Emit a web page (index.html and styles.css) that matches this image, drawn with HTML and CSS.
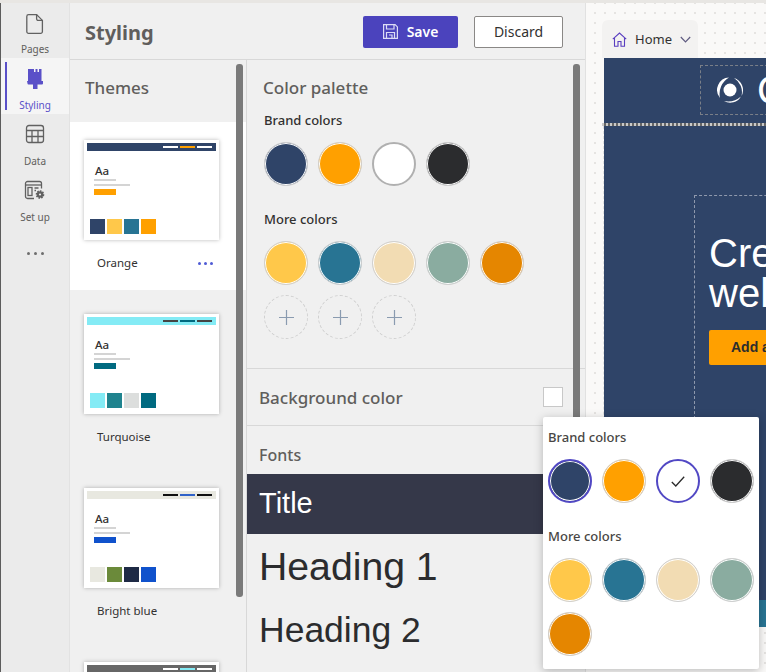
FILE: index.html
```html
<!DOCTYPE html>
<html>
<head>
  <title>Styling</title>
  <meta name="viewport" content="width=device-width, initial-scale=1.0">
  <link rel="stylesheet" href="styles.css">
</head>
<body>
  <div class="topstrip"></div>
  <div class="app">
    <nav class="rail">
      <div class="rail-item">
        <svg width="22" height="22" viewBox="0 0 22 22" fill="none" stroke="#616161" stroke-width="1.300"><path d="M4.600 1.600h8l5.800 5.800v11.200a1.800 1.800 0 0 1-1.800 1.800h-12a1.800 1.800 0 0 1-1.800-1.800v-15.200a1.800 1.800 0 0 1 1.800-1.800z"/><path d="M12.600 1.600v4.200a1.600 1.600 0 0 0 1.600 1.600h4.200"/></svg>
        <span>Pages</span>
      </div>
      <div class="rail-item active">
        <svg width="16" height="22" viewBox="0 0 16 22" fill="#5a50c8"><path d="M1 1h6v3h1.500v-3h2v3h1.500v-3h2.500v12h-13.500z"/><path d="M0 13h16v2.500a1 1 0 0 1-1 1h-4.500v4.500h-4.500v-4.500h-4.500a1 1 0 0 1-1-1z"/></svg>
        <span>Styling</span>
      </div>
      <div class="rail-item">
        <svg width="20" height="20" viewBox="0 0 20 20" fill="none" stroke="#616161" stroke-width="1.300"><rect x="1.500" y="1.500" width="17" height="17" rx="2.500"/><path d="M1.500 6.500h17M1.500 12.500h17M7 6.500v12M13 6.500v12"/></svg>
        <span>Data</span>
      </div>
      <div class="rail-item">
        <svg width="22" height="20" viewBox="0 0 22 20" fill="none" stroke="#616161" stroke-width="1.300"><path d="M10 18.500h-6.500a2 2 0 0 1-2-2v-13a2 2 0 0 1 2-2h12a2 2 0 0 1 2 2v5"/><path d="M1.500 5h16"/><rect x="4" y="7.500" width="4" height="8"/><path d="M10.500 8h4M10.500 10.500h1.500"/><circle cx="16" cy="14.500" r="3.300" fill="#616161" stroke-width="2" stroke-dasharray="1.500 1"/><circle cx="16" cy="14.500" r="1.100" fill="#ebebeb" stroke="none"/></svg>
        <span>Set up</span>
      </div>
      <div class="rail-more"><i></i><i></i><i></i></div>
    </nav>

    <main class="panel">
      <header class="panel-head">
        <h1>Styling</h1>
        <button class="btn btn-save">
          <svg width="15" height="15" viewBox="0 0 15 15" fill="none" stroke="#dcdcf5" stroke-width="1.200"><path d="M.6.600h11.500l2.300 2.300v11.500h-13.800z"/><path d="M3.500.600v4.400h7.500v-4.400M3.500 14.400v-5.900h8v5.900M6 11h3v3.400"/></svg>
          Save
        </button>
        <button class="btn btn-discard">Discard</button>
      </header>

      <div class="columns">
        <section class="themes">
          <div class="scrollbar"></div>
          <h2>Themes</h2>

          <div class="theme selected">
            <div class="thumb">
              <div class="thumb-bar bar-navy"><i class="mark-white"></i><i class="mark-orange"></i><i class="mark-white"></i></div>
              <div class="thumb-aa">Aa</div>
              <div class="thumb-line short"></div>
              <div class="thumb-line"></div>
              <div class="thumb-btn c-orange"></div>
              <div class="thumb-swatches"><i class="c-navy"></i><i class="c-yellow"></i><i class="c-teal"></i><i class="c-orange"></i></div>
            </div>
            <div class="theme-label">Orange<span class="theme-more"><i></i><i></i><i></i></span></div>
          </div>

          <div class="theme">
            <div class="thumb">
              <div class="thumb-bar bar-cyan"><i class="mark-dark"></i><i class="mark-deep"></i><i class="mark-dark"></i></div>
              <div class="thumb-aa">Aa</div>
              <div class="thumb-line short"></div>
              <div class="thumb-line"></div>
              <div class="thumb-btn c-deep"></div>
              <div class="thumb-swatches"><i class="c-cyan"></i><i class="c-sea"></i><i class="c-grey"></i><i class="c-deep"></i></div>
            </div>
            <div class="theme-label">Turquoise</div>
          </div>

          <div class="theme">
            <div class="thumb">
              <div class="thumb-bar bar-sand"><i class="mark-black"></i><i class="mark-blue"></i><i class="mark-black"></i></div>
              <div class="thumb-aa">Aa</div>
              <div class="thumb-line short"></div>
              <div class="thumb-line"></div>
              <div class="thumb-btn c-blue"></div>
              <div class="thumb-swatches"><i class="c-sand"></i><i class="c-olive"></i><i class="c-ink"></i><i class="c-blue"></i></div>
            </div>
            <div class="theme-label">Bright blue</div>
          </div>

          <div class="theme">
            <div class="thumb">
              <div class="thumb-bar bar-grey"><i class="mark-white"></i><i class="mark-cyan"></i><i class="mark-white"></i></div>
            </div>
          </div>
        </section>

        <section class="settings">
          <div class="scrollbar"></div>
          <div class="palette">
            <h2>Color palette</h2>
            <h3>Brand colors</h3>
            <div class="swatch-row">
              <div class="swatch c-navy"></div>
              <div class="swatch c-orange"></div>
              <div class="swatch c-white"></div>
              <div class="swatch c-black"></div>
            </div>
            <h3 class="more">More colors</h3>
            <div class="swatch-row">
              <div class="swatch c-yellow"></div>
              <div class="swatch c-teal"></div>
              <div class="swatch c-cream"></div>
              <div class="swatch c-sage"></div>
              <div class="swatch c-amber"></div>
              <div class="swatch add"><svg width="15" height="15" viewBox="0 0 15 15" stroke="#8a9bb0" stroke-width="1.200"><path d="M7.500 0v15M0 7.500h15"/></svg></div>
              <div class="swatch add"><svg width="15" height="15" viewBox="0 0 15 15" stroke="#8a9bb0" stroke-width="1.200"><path d="M7.500 0v15M0 7.500h15"/></svg></div>
              <div class="swatch add"><svg width="15" height="15" viewBox="0 0 15 15" stroke="#8a9bb0" stroke-width="1.200"><path d="M7.500 0v15M0 7.500h15"/></svg></div>
            </div>
          </div>
          <div class="bg-row">
            <h2>Background color</h2>
            <div class="bg-box"></div>
          </div>
          <div class="fonts">
            <h2>Fonts</h2>
            <div class="font-title">Title</div>
            <div class="font-h1">Heading 1</div>
            <div class="font-h2">Heading 2</div>
          </div>
        </section>
      </div>
    </main>

    <div class="canvas">
      <div class="tab">
        <svg width="15" height="15" viewBox="0 0 15 15" fill="none" stroke="#5a3fc0" stroke-width="1.100"><path d="M.8 7.200l6.700-6.200 6.700 6.200M2.500 5.800v8.500h3.500v-4.800h3v4.800h3.500v-8.500"/></svg>
        <span>Home</span>
        <svg width="11" height="7" viewBox="0 0 11 7" fill="none" stroke="#5f5b80" stroke-width="1.200"><path d="M.8 1l4.700 4.800 4.700-4.800"/></svg>
      </div>
      <div class="site">
        <div class="site-head">
          <div class="logo-box">
            <svg width="28" height="28" viewBox="0 0 28 28" fill="#fff"><circle cx="14" cy="14" r="6.500"/><path d="M4 22A12.500 12.500 0 0 1 13 1.500A19 19 0 0 0 4 22z"/><path d="M18 2A12.500 12.500 0 0 1 25.500 20A16.500 16.500 0 0 0 18 2z"/><path d="M25 20.500A12.500 12.500 0 0 1 8 25A20 20 0 0 0 25 20.500z"/></svg>
            <span class="logo-text">Company</span>
          </div>
        </div>
        <div class="site-sep"></div>
        <div class="site-hero">
          <div class="hero-box">
            <div class="hero-title">Create a<br>welcome</div>
            <div class="hero-btn">Add a button</div>
          </div>
        </div>
        <div class="site-band"></div>
      </div>
    </div>

    <div class="picker">
      <h3>Brand colors</h3>
      <div class="picker-row">
        <div class="swatch c-navy picked"></div>
        <div class="swatch c-orange"></div>
        <div class="swatch c-white picked">
          <svg width="14" height="11" viewBox="0 0 14 11" fill="none" stroke="#2b2b2b" stroke-width="1.300"><path d="M.8 6l4 4 8.400-9.200"/></svg>
        </div>
        <div class="swatch c-black"></div>
      </div>
      <h3 class="more">More colors</h3>
      <div class="picker-row">
        <div class="swatch c-yellow"></div>
        <div class="swatch c-teal"></div>
        <div class="swatch c-cream"></div>
        <div class="swatch c-sage"></div>
        <div class="swatch c-amber"></div>
      </div>
    </div>
  </div>
</body>
</html>
```

FILE: styles.css
```css
* {
  box-sizing: border-box;
}
body {
  margin: 0;
  width: 766px;
  height: 672px;
  overflow: hidden;
  background: #f0f0f0;
  font-family: "Noto Sans", "Open Sans", sans-serif;
  color: #323130;
}
h1, h2, h3 {
  margin: 0;
}
i {
  display: block;
}
.topstrip {
  height: 3px;
  background: #e8e6e3;
}
.app {
  position: relative;
  display: flex;
  height: 669px;
}

/* left rail */
.rail {
  width: 70px;
  flex: none;
  background: #ebebeb;
  border-left: 1px solid #5c5c5c;
  border-right: 1px solid #e2e2e2;
}
.rail-item {
  height: 56px;
  padding: 10px 0 2px;
  display: flex;
  flex-direction: column;
  align-items: center;
  justify-content: space-between;
  font-size: 10px;
  color: #605e5c;
  position: relative;
}
.rail-item:first-child {
  height: 55px;
}
.rail-item.active {
  background: #f5f5f5;
  color: #5a50c8;
}
.rail-item.active::before {
  content: "";
  position: absolute;
  left: 4px;
  top: 4px;
  bottom: 4px;
  width: 2px;
  background: #5a50c8;
}
.rail-more {
  display: flex;
  justify-content: center;
  gap: 4px;
  padding-top: 26px;
}
.rail-more i {
  width: 3px;
  height: 3px;
  border-radius: 50%;
  background: #6e6e6e;
}

/* main panel */
.panel {
  width: 516px;
  flex: none;
  background: #f0f0f0;
  border-right: 1px solid #e1e1e1;
  display: flex;
  flex-direction: column;
}
.panel-head {
  height: 57px;
  flex: none;
  display: flex;
  align-items: center;
  padding: 1px 22px 0 15px;
  border-bottom: 1px solid #d8d8d8;
}
.panel-head h1 {
  font-size: 20px;
  font-weight: 700;
  color: #605e5c;
  margin: 2px auto 0 0;
}
.btn {
  height: 32px;
  border-radius: 2px;
  font-family: inherit;
  font-size: 14px;
  display: flex;
  align-items: center;
  justify-content: center;
  padding: 0;
}
.btn-save {
  width: 95px;
  gap: 9px;
  background: #4b43bd;
  border: none;
  color: #fff;
  font-weight: 600;
  margin-right: 16px;
}
.btn-discard {
  width: 89px;
  background: #fff;
  border: 1px solid #8a8886;
  color: #323130;
}
.columns {
  flex: 1;
  min-height: 0;
  display: flex;
}

/* themes column */
.themes {
  position: relative;
  width: 177px;
  flex: none;
  overflow: hidden;
  border-right: 1px solid #d8d8d8;
}
.scrollbar {
  position: absolute;
  top: 4px;
  right: 3px;
  width: 7px;
  height: 533px;
  background: #7a7a7a;
  border-radius: 3px;
  z-index: 2;
}
.themes h2, .palette h2, .bg-row h2 {
  font-size: 17px;
  font-weight: 500;
  color: #605e5c;
}
.themes h2 {
  height: 62px;
  padding: 16px 0 0 15px;
}
.theme {
  height: 168px;
  margin-bottom: 6px;
  padding: 18px 0 0 14px;
}
.theme.selected {
  background: #fff;
}
.thumb {
  width: 135px;
  height: 100px;
  background: #fff;
  box-shadow: 0 0 4px rgba(0,0,0,0.28);
  padding-top: 3px;
  position: relative;
}
.thumb-bar {
  height: 8px;
  margin: 0 3px;
  display: flex;
  justify-content: flex-end;
  align-items: center;
  gap: 2px;
  padding-right: 4px;
}
.thumb-bar i {
  width: 15px;
  height: 2px;
}
.bar-navy { background: #2f4468; }
.bar-cyan { background: #84ebf5; }
.bar-sand { background: #e8e8e0; }
.bar-grey { background: #666; }
.mark-white { background: #fff; }
.mark-orange { background: #ffa000; }
.mark-dark { background: #444; }
.mark-deep { background: #006a80; }
.mark-black { background: #111; }
.mark-blue { background: #2f62c8; }
.mark-cyan { background: #84ebf5; }
.thumb-aa {
  font-size: 11.500px;
  font-weight: 500;
  line-height: 14px;
  margin: 13px 0 1px 11px;
}
.thumb-line {
  width: 36px;
  height: 2px;
  background: #d4d4d4;
  margin: 0 0 3px 10px;
}
.thumb-line.short {
  width: 22px;
}
.thumb-btn {
  width: 22px;
  height: 6px;
  margin: 3px 0 0 10px;
}
.thumb-swatches {
  position: absolute;
  left: 6px;
  bottom: 6px;
  display: flex;
  gap: 2px;
}
.thumb-swatches i {
  width: 15px;
  height: 15px;
}
.theme-label {
  display: flex;
  justify-content: space-between;
  align-items: center;
  width: 116px;
  margin: 14px 0 0 13px;
  font-size: 11.500px;
  line-height: 18px;
}
.theme-more {
  display: flex;
  gap: 3px;
}
.theme-more i {
  width: 3px;
  height: 3px;
  border-radius: 50%;
  background: #4f5bd5;
}

/* colours, shared by thumbs and swatches */
.c-navy { background-color: #2f4468; }
.c-orange { background-color: #ffa000; }
.c-white { background-color: #fff; }
.c-black { background-color: #2b2c2e; }
.c-yellow { background-color: #ffc84a; }
.c-teal { background-color: #287493; }
.c-cream { background-color: #f2dcb3; }
.c-sage { background-color: #8aaca0; }
.c-amber { background-color: #e58600; }
.c-cyan { background-color: #84ebf5; }
.c-sea { background-color: #1f838e; }
.c-grey { background-color: #dcdedd; }
.c-deep { background-color: #006a80; }
.c-sand { background-color: #e8e8e0; }
.c-olive { background-color: #6b8a3a; }
.c-ink { background-color: #1e2a45; }
.c-blue { background-color: #1052cc; }

/* settings column */
.settings {
  position: relative;
  flex: 1;
  min-width: 0;
  overflow: hidden;
}
.settings .scrollbar {
  right: 5px;
}
.palette {
  height: 309px;
  padding: 16px 0 0 17px;
  border-bottom: 1px solid #d8d8d8;
}
.palette h2 {
  margin: 0 0 12px -1px;
  line-height: 23px;
}
h3 {
  font-size: 13px;
  font-weight: 500;
  line-height: 18px;
  color: #323130;
}
h3.more {
  margin-top: 24px;
}
.swatch-row, .picker-row {
  display: flex;
  flex-wrap: wrap;
  gap: 10px;
  margin-top: 13px;
  width: 270px;
}
.swatch {
  width: 44px;
  height: 44px;
  border-radius: 50%;
  border: 1px solid #d0d0d0;
  box-shadow: inset 0 0 0 1px #fff;
  display: flex;
  align-items: center;
  justify-content: center;
}
.swatch.c-white {
  border: 2px solid #b0b0b0;
}
.swatch.add {
  border: 1px dashed #cfcfcf;
  box-shadow: none;
}
.bg-row {
  height: 57px;
  display: flex;
  align-items: center;
  justify-content: space-between;
  padding: 0 22px 0 12px;
  border-bottom: 1px solid #d8d8d8;
}
.bg-box {
  width: 20px;
  height: 20px;
  background: #fff;
  border: 1px solid #c8c8c8;
}
.fonts h2 {
  font-size: 16px;
  font-weight: 500;
  line-height: 22px;
  color: #605e5c;
  padding: 18px 0 0 12px;
  height: 48px;
}
.font-title, .font-h1, .font-h2 {
  font-family: "Liberation Sans", Arial, sans-serif;
  padding-left: 12px;
  color: #2b2c2e;
  white-space: nowrap;
}
.font-title {
  height: 60px;
  line-height: 58px;
  background: #353849;
  color: #fff;
  font-size: 29px;
}
.font-h1 {
  font-size: 39.200px;
  line-height: 66px;
}
.font-h2 {
  font-size: 35.500px;
  line-height: 60px;
}

/* canvas preview */
.canvas {
  flex: 1;
  min-width: 0;
  overflow: hidden;
  background-color: #faf9f8;
  background-image: radial-gradient(circle, #e6e4e2 0.8px, transparent 1.100px);
  background-size: 10px 10px;
  background-position: 4px 5px;
  padding-top: 17px;
}
.tab {
  width: 96px;
  height: 38px;
  margin-left: 16px;
  background: #f3f2f1;
  border-radius: 6px 6px 0 0;
  display: flex;
  align-items: center;
  gap: 8px;
  padding-left: 10px;
  font-size: 13px;
  line-height: 1;
}
.site {
  width: 600px;
  margin-left: 18px;
  background: #2f4468;
  height: 569px;
  display: flex;
  flex-direction: column;
}
.site-head {
  height: 65px;
  flex: none;
  padding: 7px 0 0 96px;
}
.site-sep {
  height: 3px;
  flex: none;
  margin-left: -2px;
  background: repeating-linear-gradient(90deg, #c8c8c8 0 2px, #666 2px 4px);
}
.logo-box {
  height: 50px;
  border: 1px dashed #7a7f88;
  display: flex;
  align-items: center;
  gap: 13px;
  padding-left: 15px;
}
.logo-text {
  color: #fff;
  font-family: "Liberation Sans", Arial, sans-serif;
  font-size: 40px;
  white-space: nowrap;
}
.site-hero {
  flex: 1;
  margin-left: -1px;
  padding: 69px 0 0 90px;
  border-left: 1px dashed #e0e0e0;
}
.hero-box {
  height: 400px;
  border: 1px dashed #8f99ad;
  border-bottom: none;
  padding: 37px 0 0 14px;
}
.hero-title {
  color: #fff;
  font-family: "Liberation Sans", Arial, sans-serif;
  font-size: 40px;
  line-height: 40px;
  white-space: nowrap;
}
.hero-btn {
  width: 200px;
  height: 35px;
  margin-top: 17px;
  background: #ffa000;
  border-radius: 2px;
  color: #2b2c2e;
  font-family: "Liberation Sans", Arial, sans-serif;
  font-weight: 700;
  font-size: 14px;
  line-height: 35px;
  padding-left: 22px;
}
.site-band {
  height: 27px;
  flex: none;
  background: #287493;
}

/* floating colour menu */
.picker {
  position: absolute;
  left: 543px;
  top: 414px;
  width: 216px;
  height: 252px;
  background: #fff;
  border-radius: 2px;
  box-shadow: 0 2px 10px rgba(0,0,0,0.25);
  padding: 11px 0 0 5px;
  z-index: 5;
}
.picker-row {
  width: 216px;
}
.swatch.picked {
  border: 2px solid #5148c4;
  box-shadow: inset 0 0 0 1px #fff;
}
.picker h3 {
  color: #484644;
}
```
